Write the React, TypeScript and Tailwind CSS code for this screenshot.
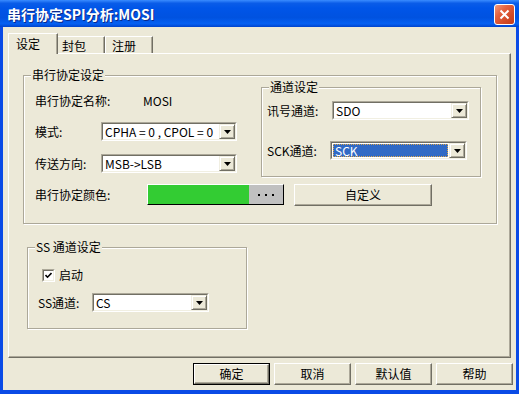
import React from 'react';

const Arrow = () => (
  <svg width="7" height="4" viewBox="0 0 7 4">
    <path d="M0 0h7L3.5 4z" fill="#000" />
  </svg>
);

const Combo = ({ value, className, selected = false }: { value: string; className: string; selected?: boolean }) => (
  <div className={`h-[19px] flex border border-t-[#aca899] border-l-[#aca899] border-b-white border-r-white ${className}`}>
    <div className="flex-1 min-w-0 flex bg-white border border-t-[#716f64] border-l-[#716f64] border-b-[#f1efe2] border-r-[#f1efe2]">
      <div className="flex-1 min-w-0 flex items-center p-[1px]">
        {selected ? (
          <span className="h-full w-full flex items-center pl-[1px] bg-[#316ac5] text-white border border-dotted border-[#e0a848]">
            {value}
          </span>
        ) : (
          <span className="pl-[1px] whitespace-pre">{value}</span>
        )}
      </div>
      <div className="w-[16px] flex items-center justify-center bg-[#ece9d8] border border-t-[#f1efe2] border-l-[#f1efe2] border-b-[#716f64] border-r-[#716f64] shadow-[inset_1px_1px_0_#fff,inset_-1px_-1px_0_#aca899]">
        <Arrow />
      </div>
    </div>
  </div>
);

const GroupBox = ({ title, className, children }: { title: string; className: string; children: React.ReactNode }) => (
  <div className={`relative border border-[#aca899] shadow-[inset_1px_1px_0_#fff,1px_1px_0_#fff] ${className}`}>
    <span className="absolute top-[-8px] left-[7px] px-[1px] bg-[#ece9d8] leading-[14px]">{title}</span>
    {children}
  </div>
);

const Button = ({ label, className, isDefault = false }: { label: string; className: string; isDefault?: boolean }) => (
  <div className={`h-[22px] ${isDefault ? 'border border-black' : ''} ${className}`}>
    <div className="h-full flex items-center justify-center bg-[#ece9d8] border border-t-white border-l-white border-b-[#716f64] border-r-[#716f64] shadow-[inset_-1px_-1px_0_#aca899]">
      {label}
    </div>
  </div>
);

export default function App() {
  return (
    <div className="w-[519px] h-[394px] flex flex-col bg-[#0a4be6] font-['Noto_Sans_CJK_SC',sans-serif] text-[12px] leading-[14px] text-black">
      {/* title bar */}
      <div className="h-[27px] flex items-start justify-between pl-[7px] pr-[4px] bg-[linear-gradient(to_bottom,#3a8cff_0%,#0a5ce8_12%,#0055e8_30%,#0052e0_65%,#0560f2_88%,#0043cc_100%)]">
        <span className="mt-[5px] text-white font-bold text-[14px] leading-[18px] [text-shadow:1px_1px_0_#0c2a8a]">
          串行协定SPI分析:MOSI
        </span>
        <div className="mt-[4px] w-[21px] h-[21px] rounded-[3px] border border-white bg-[linear-gradient(135deg,#f29a7c_0%,#e4623f_35%,#d24a26_70%,#c23c1a_100%)] flex items-center justify-center">
          <svg width="11" height="11" viewBox="0 0 11 11">
            <path d="M1.5 1.5L9.5 9.5M9.5 1.5L1.5 9.5" stroke="#fff" strokeWidth="2" />
          </svg>
        </div>
      </div>

      {/* body */}
      <div className="mx-[3px] h-[363px] bg-[#ece9d8] pt-[6px] pl-[5px]">
        {/* tabs */}
        <div className="h-[20px] flex items-end">
          <div className="relative z-10 -mb-[1px] h-[21px] w-[50px] pl-[7px] pt-[3px] bg-[#ece9d8] border-t border-l border-t-white border-l-white border-r border-r-[#716f64] shadow-[inset_-1px_0_0_#aca899]">
            设定
          </div>
          <div className="h-[17px] w-[47px] pl-[4px] pt-[2px] border-t border-t-white border-r border-r-[#716f64] shadow-[inset_-1px_0_0_#aca899]">
            封包
          </div>
          <div className="h-[17px] w-[48px] pl-[6px] pt-[2px] border-t border-l border-t-white border-l-white border-r border-r-[#716f64] shadow-[inset_-1px_0_0_#aca899]">
            注册
          </div>
        </div>

        {/* panel */}
        <div className="w-[503px] h-[305px] flex flex-col border border-t-white border-l-white border-r-[#716f64] border-b-[#716f64] shadow-[inset_-1px_-1px_0_#aca899]">
          <GroupBox title="串行协定设定" className="ml-[14px] mt-[21px] w-[474px] h-[149px]">
            <div className="flex">
              <div className="w-[237px] flex flex-col pl-[11px] pt-[15px]">
                <div className="h-[19px] flex items-center">
                  <span className="w-[108px]">串行协定名称:</span>
                  <span>MOSI</span>
                </div>
                <div className="mt-[12px] h-[19px] flex items-center">
                  <span className="w-[66px]">模式:</span>
                  <Combo value="CPHA = 0 , CPOL = 0" className="w-[136px]" />
                </div>
                <div className="mt-[13px] h-[19px] flex items-center">
                  <span className="w-[66px]">传送方向:</span>
                  <Combo value="MSB->LSB" className="w-[136px]" />
                </div>
              </div>
              <GroupBox title="通道设定" className="mt-[11px] w-[220px] h-[90px]">
                <div className="flex flex-col pl-[5px] pt-[13px]">
                  <div className="h-[19px] flex items-center">
                    <span className="w-[65px]">讯号通道:</span>
                    <Combo value="SDO" className="w-[137px]" />
                  </div>
                  <div className="mt-[21px] h-[19px] flex items-center">
                    <span className="w-[63px]">SCK通道:</span>
                    <Combo value="SCK" className="w-[137px]" selected />
                  </div>
                </div>
              </GroupBox>
            </div>
            <div className="mt-[7px] pl-[11px] flex items-start">
              <span className="w-[112px] mt-[4px]">串行协定颜色:</span>
              <div className="w-[137px] h-[21px] flex border border-t-white border-l-white border-b-black border-r-black">
                <div className="w-[101px] shrink-0 bg-[#33cc33]" />
                <div className="flex-1 bg-[#c0c0c0] flex items-center justify-center gap-[5px]">
                  <span className="w-[2px] h-[2px] bg-black" />
                  <span className="w-[2px] h-[2px] bg-black" />
                  <span className="w-[2px] h-[2px] bg-black" />
                </div>
              </div>
              <Button label="自定义" className="ml-[10px] w-[138px]" />
            </div>
          </GroupBox>

          <GroupBox title="SS 通道设定" className="ml-[18px] mt-[23px] w-[220px] h-[82px]">
            <div className="flex flex-col">
              <div className="mt-[20px] pl-[14px] flex items-center">
                <div className="w-[13px] h-[13px] border border-t-[#aca899] border-l-[#aca899] border-b-white border-r-white">
                  <div className="w-full h-full flex items-center justify-center bg-white border border-t-[#716f64] border-l-[#716f64] border-b-[#f1efe2] border-r-[#f1efe2]">
                    <svg width="7" height="7" viewBox="0 0 7 7">
                      <path d="M0.5 3L2.5 5.2L6.5 1" stroke="#000" strokeWidth="1.6" fill="none" />
                    </svg>
                  </div>
                </div>
                <span className="ml-[4px]">启动</span>
              </div>
              <div className="mt-[11px] pl-[10px] h-[19px] flex items-center">
                <span className="w-[54px]">SS通道:</span>
                <Combo value="CS" className="w-[117px]" />
              </div>
            </div>
          </GroupBox>
        </div>

        {/* buttons */}
        <div className="mt-[5px] ml-[185px] flex gap-[4px]">
          <Button label="确定" className="w-[77px]" isDefault />
          <Button label="取消" className="w-[77px]" />
          <Button label="默认值" className="w-[77px]" />
          <Button label="帮助" className="w-[77px]" />
        </div>
      </div>
    </div>
  );
}
